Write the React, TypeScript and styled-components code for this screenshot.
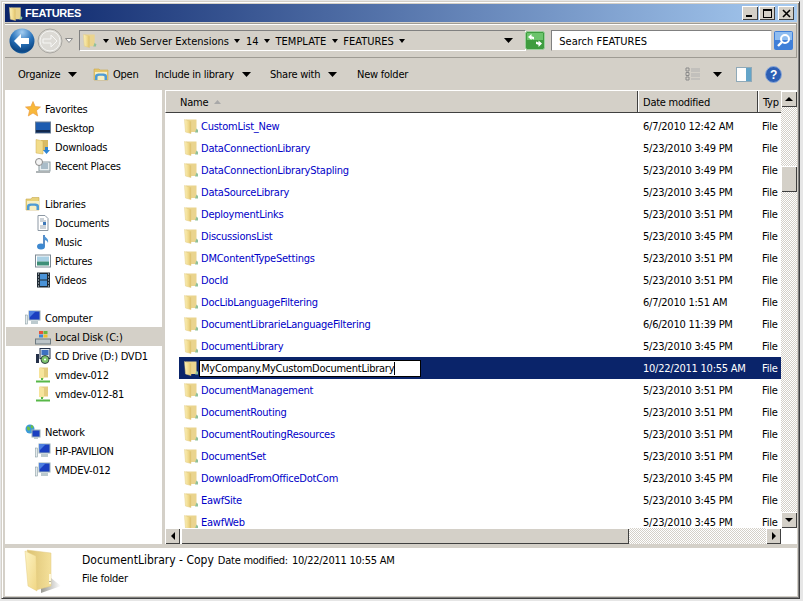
import { ReactNode, useId } from "react";
import styled, { createGlobalStyle } from "styled-components";

const rows = [
  ["CustomList_New", "6/7/2010 12:42 AM"],
  ["DataConnectionLibrary", "5/23/2010 3:49 PM"],
  ["DataConnectionLibraryStapling", "5/23/2010 3:49 PM"],
  ["DataSourceLibrary", "5/23/2010 3:45 PM"],
  ["DeploymentLinks", "5/23/2010 3:51 PM"],
  ["DiscussionsList", "5/23/2010 3:45 PM"],
  ["DMContentTypeSettings", "5/23/2010 3:51 PM"],
  ["DocId", "5/23/2010 3:51 PM"],
  ["DocLibLanguageFiltering", "6/7/2010 1:51 AM"],
  ["DocumentLibrarieLanguageFiltering", "6/6/2010 11:39 PM"],
  ["DocumentLibrary", "5/23/2010 3:45 PM"],
  ["MyCompany.MyCustomDocumentLibrary", "10/22/2011 10:55 AM", "edit"],
  ["DocumentManagement", "5/23/2010 3:51 PM"],
  ["DocumentRouting", "5/23/2010 3:51 PM"],
  ["DocumentRoutingResources", "5/23/2010 3:51 PM"],
  ["DocumentSet", "5/23/2010 3:51 PM"],
  ["DownloadFromOfficeDotCom", "5/23/2010 3:45 PM"],
  ["EawfSite", "5/23/2010 3:45 PM"],
  ["EawfWeb", "5/23/2010 3:45 PM"],
];

const FolderIcon = ({ size = 16 }: { size?: number }) => {
  const id = useId();
  return (
    <svg width={size} height={size} viewBox="0 0 16 16" style={{ flex: "none" }}>
      <defs>
        <linearGradient id={id} x1="0" y1="0" x2="1" y2="0">
          <stop offset="0" stopColor="#fbf1bb" />
          <stop offset="0.6" stopColor="#f0d98c" />
          <stop offset="1" stopColor="#dcbf68" />
        </linearGradient>
      </defs>
      <path d="M3 1.500h10.500v12.500H8z" fill="#ead48e" />
      <path d="M13.500 10.500l1.500 1.500v2.500h-3z" fill="#8fc09a" />
      <path d="M1.500 1.500l6.500 2v12l-5.500-1.500z" fill={`url(#${id})`} stroke="#e2ca80" strokeWidth="0.500" />
    </svg>
  );
};

const LargeFolder = () => (
  <svg width="42" height="46" viewBox="0 0 42 46">
    <defs>
      <linearGradient id="bigLeaf" x1="0" y1="0" x2="1" y2="1">
        <stop offset="0" stopColor="#fdf3c2" />
        <stop offset="1" stopColor="#f0d684" />
      </linearGradient>
      <linearGradient id="bigBack" x1="0" y1="0" x2="1" y2="0">
        <stop offset="0" stopColor="#dcc272" />
        <stop offset="1" stopColor="#f4e09a" />
      </linearGradient>
      <linearGradient id="bigShadow" x1="0" y1="0" x2="1" y2="0">
        <stop offset="0" stopColor="#9a9a94" />
        <stop offset="1" stopColor="#ffffff" />
      </linearGradient>
    </defs>
    <path d="M18 36l10-7 10 8-20 7z" fill="url(#bigShadow)" />
    <path d="M4 1l24 3v33L13 41z" fill="url(#bigBack)" stroke="#e2cb84" strokeWidth="0.500" />
    <path d="M2 2l11 5 1 35-9-5z" fill="url(#bigLeaf)" stroke="#e5cc80" strokeWidth="0.500" />
    <rect x="26" y="25" width="2" height="10" fill="#fff8d8" />
    <rect x="26.500" y="32" width="1" height="1" fill="#6a6a60" />
  </svg>
);

const Caret = ({ color = "#000" }: { color?: string }) => (
  <svg width="9" height="5" viewBox="0 0 9 5" style={{ flex: "none" }}>
    <path d="M0 0h9L4.500 5z" fill={color} />
  </svg>
);

const SmallCaret = () => (
  <svg width="6" height="4" viewBox="0 0 6 4" style={{ flex: "none" }}>
    <path d="M0 0h6L3 4z" fill="#000" />
  </svg>
);

const BackButton = () => (
  <svg width="26" height="26" viewBox="0 0 26 26">
    <defs>
      <radialGradient id="backFill" cx="0.5" cy="0.15" r="0.95">
        <stop offset="0" stopColor="#a4cdf0" />
        <stop offset="0.45" stopColor="#2a74bc" />
        <stop offset="0.8" stopColor="#0c4684" />
        <stop offset="1" stopColor="#2a80c4" />
      </radialGradient>
    </defs>
    <circle cx="13" cy="13" r="12.500" fill="url(#backFill)" />
    <path d="M5 13l7-7v4h8v6h-8v4z" fill="#fff" />
  </svg>
);

const ForwardButton = () => (
  <svg width="26" height="26" viewBox="0 0 26 26">
    <circle cx="13" cy="13" r="12" fill="#d8d6d0" stroke="#a9a7a2" />
    <circle cx="13" cy="13" r="10" fill="#dcdad5" stroke="#f4f4f2" />
    <path d="M20 13l-6-6v4H6v4h8v4z" fill="#dddbd6" stroke="#f6f6f4" />
  </svg>
);

const RefreshIcon = () => (
  <svg width="20" height="19" viewBox="0 0 20 19">
    <rect x="0.500" y="0.500" width="19" height="18" rx="2" fill="#3f9c3f" stroke="#9ccf9c" />
    <rect x="2" y="2" width="16" height="7" fill="#6cc46c" />
    <path d="M3 6l3.500-3v2.200L9 6v2.500L6.500 7.500V9z" fill="#fff" />
    <path d="M17 12.500L13.500 16v-2.200L11 13v-2.500l2.500 1V9.500z" fill="#fff" />
  </svg>
);

const SearchIcon = () => (
  <svg width="19" height="19" viewBox="0 0 19 19">
    <rect x="0" y="0" width="19" height="19" rx="2" fill="#3f7fd8" />
    <rect x="1" y="1" width="17" height="8" fill="#8fbdf0" />
    <circle cx="11" cy="8" r="4" fill="none" stroke="#fff" strokeWidth="2" />
    <path d="M8 11l-4 4" stroke="#fff" strokeWidth="2.400" />
  </svg>
);

const ViewsIcon = () => (
  <svg width="16" height="14" viewBox="0 0 16 14">
    <path d="M1 1h3v3H1zM1 5.500h3v3H1zM1 10h3v3H1z" fill="none" stroke="#8a8a8a" />
    <path d="M6 2h9M6 4h9M6 7h9M6 9h9M6 12h9" stroke="#b0b0b0" />
  </svg>
);

const PaneIcon = () => (
  <svg width="16" height="15" viewBox="0 0 16 15">
    <rect x="0.500" y="0.500" width="15" height="14" fill="#fdfdfd" stroke="#8fa9b8" />
    <rect x="10" y="1" width="5" height="13" fill="#63a4c8" />
  </svg>
);

const HelpIcon = () => (
  <svg width="17" height="17" viewBox="0 0 17 17">
    <circle cx="8.500" cy="8.500" r="8" fill="#2d5fb4" stroke="#8aa8d8" />
    <text x="8.500" y="13" textAnchor="middle" fontFamily="Liberation Sans, sans-serif" fontWeight="700" fontSize="12" fill="#fff">?</text>
  </svg>
);

const OpenIcon = () => (
  <svg width="16" height="16" viewBox="0 0 16 16">
    <path d="M1 3h5l1 1h8v10H1z" fill="#e8c76a" stroke="#c8a84e" strokeWidth="0.600" />
    <path d="M2 6h12v8H2z" fill="#f6efc4" />
    <path d="M2 14V10c0-2 2-2.500 6-2.500S14 8 14 10v4h-2.500v-3c0-1-1-1.200-3.500-1.200S4.500 10 4.500 11v3z" fill="#4e9bd4" />
  </svg>
);

const icons: Record<string, ReactNode> = {
  star: <path d="M8 0.500l2.200 5 5.300 0.500-4 3.500 1.200 5.500L8 12l-4.700 3 1.200-5.500-4-3.500 5.300-0.500z" fill="#f8b83a" stroke="#e8953a" strokeWidth="0.600" />,
  desktop: (
    <>
      <rect x="0.500" y="2" width="15" height="11" fill="#1d5cb0" stroke="#6c7f96" />
      <rect x="1" y="10" width="14" height="2.500" fill="#12284c" />
    </>
  ),
  downloads: (
    <>
      <path d="M6 1h7v11H6z" fill="#d9bb62" />
      <path d="M1 0.500l7 1.500v13l-7-1z" fill="#f2dc8a" stroke="#cfae56" strokeWidth="0.500" />
      <path d="M10 8h3v3h2l-3.500 4L8 11h2z" fill="#2d84d4" />
    </>
  ),
  recent: (
    <>
      <rect x="4" y="4" width="11" height="9" fill="#e8eef0" stroke="#8a9aa0" />
      <path d="M6 6h7M6 8h7M6 10h7" stroke="#6a8aa0" />
      <circle cx="4" cy="4" r="3.500" fill="#f4f4f4" stroke="#8a8a8a" />
      <rect x="1" y="13" width="14" height="2" fill="#aeb4b6" />
    </>
  ),
  libraries: (
    <>
      <path d="M1 3h5l1-1.500h7V14H1z" fill="#e8d27a" stroke="#c8a84e" strokeWidth="0.600" />
      <path d="M2 5h12v9H2z" fill="#f6efc4" />
      <path d="M2 14v-4c0-2 2-2.500 6-2.500s6 .5 6 2.500v4h-2.500v-3c0-1-1-1.200-3.500-1.200S4.500 10 4.500 11v3z" fill="#4e9bd4" />
    </>
  ),
  documents: (
    <>
      <path d="M3 0.500h7l3 3v12H3z" fill="#fff" stroke="#8d98a4" />
      <path d="M5 4h4M5 6h6M5 11h6M5 13h6" stroke="#9aa6b2" />
      <rect x="8" y="7" width="3" height="3" fill="#3f78b8" />
    </>
  ),
  music: (
    <>
      <path d="M9 1v11" stroke="#3470b4" strokeWidth="1.600" />
      <path d="M9 1c1 3 5 3 4 8-.5-2-2-3-4-3z" fill="#4e94d4" />
      <ellipse cx="6" cy="12.500" rx="4" ry="3" fill="#3d88d0" />
    </>
  ),
  pictures: (
    <>
      <rect x="0.500" y="2" width="15" height="12" fill="#fff" stroke="#7d8a94" />
      <rect x="2" y="3.500" width="12" height="5" fill="#a9d0e4" />
      <rect x="2" y="8.500" width="12" height="4" fill="#3f8f78" />
    </>
  ),
  videos: (
    <>
      <rect x="2" y="0.500" width="13" height="15" fill="#1f2a34" />
      <rect x="5" y="2" width="7" height="5.500" fill="#4a93d8" />
      <rect x="5" y="8.500" width="7" height="5.500" fill="#4a93d8" />
      <path d="M3 2h1M3 5h1M3 8h1M3 11h1M3 14h1M13 2h1M13 5h1M13 8h1M13 11h1M13 14h1" stroke="#dfe6ea" />
    </>
  ),
  computer: (
    <>
      <rect x="4" y="1" width="11" height="9" fill="#1a3fc0" stroke="#9ab0b8" />
      <path d="M4 1h7L4 8z" fill="#4d7fe0" />
      <rect x="0.500" y="5" width="2" height="9" fill="#e4eaec" stroke="#7a9098" strokeWidth="0.500" />
      <rect x="6" y="11" width="7" height="3" fill="#bccace" />
    </>
  ),
  disk: (
    <>
      <rect x="0.500" y="10" width="15" height="5" fill="#bcc4c8" stroke="#6d7a80" />
      <path d="M4 2h4v3H4z" fill="#e8553a" />
      <path d="M8.500 2h4v3h-4z" fill="#6db83f" />
      <path d="M4 5.500h4v3H4z" fill="#3d88d8" />
      <path d="M8.500 5.500h4v3h-4z" fill="#f0c02c" />
    </>
  ),
  cd: (
    <>
      <rect x="5" y="0.500" width="10" height="10" fill="#dfe8f0" stroke="#22304a" />
      <rect x="6.500" y="2" width="7" height="5" fill="#3d70c0" />
      <path d="M1 6h3v9H1z" fill="#243048" />
      <circle cx="10" cy="11.500" r="4" fill="#7bc26a" stroke="#344" />
      <circle cx="10" cy="11.500" r="1" fill="#fff" />
    </>
  ),
  share: (
    <>
      <path d="M5 0.500h8v10H5z" fill="#e4cc80" />
      <path d="M4 0.500l5 1.500v10l-5-1z" fill="#f6e49c" />
      <path d="M7 11v2M1 14.500h14" stroke="#58b848" strokeWidth="2" />
    </>
  ),
  network: (
    <>
      <circle cx="5" cy="5" r="4.500" fill="#3c9ad8" />
      <path d="M2 3c2-1 3 0 3 2s-2 2-3 0zM6 1c2 0 3 2 2 3s-3 0-2-3z" fill="#6cc048" />
      <rect x="7" y="6" width="8" height="7" fill="#1a3fc0" stroke="#9ab0b8" />
      <rect x="9" y="13" width="4" height="2" fill="#bccace" />
    </>
  ),
};

const NavIcon = ({ name }: { name: string }) => (
  <svg width="16" height="16" viewBox="0 0 16 16" style={{ flex: "none" }}>
    {icons[name]}
  </svg>
);

const nav = [
  { head: ["star", "Favorites"], items: [["desktop", "Desktop"], ["downloads", "Downloads"], ["recent", "Recent Places"]] },
  { head: ["libraries", "Libraries"], items: [["documents", "Documents"], ["music", "Music"], ["pictures", "Pictures"], ["videos", "Videos"]] },
  { head: ["computer", "Computer"], items: [["disk", "Local Disk (C:)"], ["cd", "CD Drive (D:) DVD1"], ["share", "vmdev-012"], ["share", "vmdev-012-81"]] },
  { head: ["network", "Network"], items: [["computer", "HP-PAVILION"], ["computer", "VMDEV-012"]] },
];

const App = () => (
  <>
    <GlobalStyle />
    <Window>
      <TitleBar>
        <FolderIcon size={15} />
        <TitleText>FEATURES</TitleText>
        <WindowButtons>
          <WindowButton><Minimize /></WindowButton>
          <WindowButton><Maximize /></WindowButton>
          <WindowButton>
            <svg width="9" height="9" viewBox="0 0 9 9"><path d="M1 1l7 7M8 1L1 8" stroke="#000" strokeWidth="1.600" /></svg>
          </WindowButton>
        </WindowButtons>
      </TitleBar>

      <AddressBar>
        <BackButton />
        <ForwardSlot><ForwardButton /></ForwardSlot>
        <HistoryArrow>
          <svg width="8" height="5" viewBox="0 0 8 5"><path d="M0.500 0.500h7L4 4.500z" fill="#fff" stroke="#8a8a8a" /></svg>
        </HistoryArrow>
        <AddressBox>
          <FolderIcon size={15} />
          <Crumbs>
            <SmallCaret />
            <span>Web Server Extensions</span>
            <SmallCaret />
            <span>14</span>
            <SmallCaret />
            <span>TEMPLATE</span>
            <SmallCaret />
            <span>FEATURES</span>
            <SmallCaret />
          </Crumbs>
          <AddressDrop><Caret /></AddressDrop>
        </AddressBox>
        <RefreshSlot><RefreshIcon /></RefreshSlot>
        <SearchBox>Search FEATURES</SearchBox>
        <SearchSlot><SearchIcon /></SearchSlot>
      </AddressBar>

      <CommandBar>
        <Command $width={75}>Organize<Caret /></Command>
        <OpenCommand><OpenIcon />Open</OpenCommand>
        <Command $width={115}>Include in library<Caret /></Command>
        <Command $width={87}>Share with<Caret /></Command>
        <span>New folder</span>
        <CommandRight>
          <ViewsIcon />
          <ViewCaret><Caret /></ViewCaret>
          <PaneIcon />
          <HelpSlot><HelpIcon /></HelpSlot>
        </CommandRight>
      </CommandBar>

      <Main>
        <NavPane>
          {nav.map((group) => (
            <NavGroup key={group.head[1]}>
              <NavHead>
                <NavIcon name={group.head[0]} />
                {group.head[1]}
              </NavHead>
              {group.items.map(([icon, label]) => (
                <NavItem key={label} $active={label === "Local Disk (C:)"}>
                  <NavIcon name={icon} />
                  {label}
                </NavItem>
              ))}
            </NavGroup>
          ))}
        </NavPane>

        <Content>
          <ContentTop>
            <ListArea>
              <Header>
                <NameHead>
                  Name
                  <svg width="7" height="4" viewBox="0 0 7 4"><path d="M0 4h7L3.500 0z" fill="#a8a8a8" /></svg>
                </NameHead>
                <DateHead>Date modified</DateHead>
                <TypeHead>Typ</TypeHead>
              </Header>
              <Rows>
                {rows.map(([name, date, edit]) => (
                  <Row key={name} $selected={!!edit}>
                    <NameCell>
                      <FolderIcon />
                      {edit ? (
                        <RenameBox><RenameText>{name}</RenameText></RenameBox>
                      ) : (
                        <FileName>{name}</FileName>
                      )}
                    </NameCell>
                    <DateCell>{date}</DateCell>
                    <TypeCell>File</TypeCell>
                  </Row>
                ))}
              </Rows>
            </ListArea>
            <VScroll>
              <ScrollButton $w={16} $h={16}><Arrow $dir="up" /></ScrollButton>
              <VTrack>
                <VThumb />
              </VTrack>
              <ScrollButton $w={16} $h={16}><Arrow $dir="down" /></ScrollButton>
            </VScroll>
          </ContentTop>
          <HScrollRow>
            <HScroll>
              <ScrollButton $w={15} $h={16}><Arrow $dir="left" /></ScrollButton>
              <HThumb />
              <HTrack />
              <ScrollButton $w={15} $h={16}><Arrow $dir="right" /></ScrollButton>
            </HScroll>
            <Corner />
          </HScrollRow>
        </Content>
      </Main>

      <Details>
        <LargeFolder />
        <DetailText>
          <DetailLine>
            <DetailName>DocumentLibrary - Copy</DetailName>
            <span>Date modified:</span>
            <span>10/22/2011 10:55 AM</span>
          </DetailLine>
          <span>File folder</span>
        </DetailText>
      </Details>
    </Window>
  </>
);

export default App;

const GlobalStyle = createGlobalStyle`
  html, body {
    margin: 0;
    padding: 0;
    background: #e6e6e6;
    overflow: hidden;
  }

  body {
    font-family: "DejaVu Sans Condensed", "DejaVu Sans", sans-serif;
    font-size: 11px;
    letter-spacing: -0.24px;
    color: #000;
  }
`;

const Window = styled.div`
  box-sizing: border-box;
  width: 799px;
  height: 598px;
  margin: 1px 0 0 1px;
  padding: 2px 2px 2px 3px;
  display: flex;
  flex-direction: column;
  background: #d4d0c8;
  border: 1px solid;
  border-color: #d4d0c8 #404040 #404040 #d4d0c8;
  box-shadow: inset 1px 1px 0 #fff, inset -1px -1px 0 #808080;
`;

const TitleBar = styled.div`
  height: 18px;
  flex: none;
  display: flex;
  align-items: center;
  padding-left: 3px;
  gap: 2px;
  background: linear-gradient(90deg, #0a246a, #a6caf0);
`;

const TitleText = styled.span`
  color: #fff;
  font-family: "Liberation Sans", sans-serif;
  font-weight: 700;
  font-size: 11px;
  letter-spacing: -0.3px;
`;

const WindowButtons = styled.div`
  margin-left: auto;
  margin-right: 3px;
  display: flex;
  gap: 0;
`;

const WindowButton = styled.div`
  width: 16px;
  height: 14px;
  margin-left: 1px;
  background: #d4d0c8;
  box-shadow: inset 1px 1px 0 #fff, inset -1px -1px 0 #404040;
  display: flex;
  align-items: center;
  justify-content: center;

  &:first-child {
    margin-left: 0;
  }
  &:nth-child(2) {
    margin-right: 2px;
  }
`;

const Minimize = styled.div`
  width: 6px;
  height: 2px;
  background: #000;
  margin: 6px 3px 0 0;
`;

const Maximize = styled.div`
  width: 7px;
  height: 6px;
  border: 1px solid #000;
  border-top-width: 2px;
`;

const AddressBar = styled.div`
  height: 35px;
  flex: none;
  margin-top: 1px;
  box-sizing: border-box;
  display: flex;
  align-items: center;
  padding: 0 3px 0 4px;
  border: 1px solid #9e9b93;
  border-left: 0;
  box-shadow: inset 0 1px 0 #fff;
`;

const ForwardSlot = styled.div`
  margin-left: 2px;
  display: flex;
`;

const HistoryArrow = styled.div`
  margin: 0 6px 0 2px;
  display: flex;
`;

const AddressBox = styled.div`
  box-sizing: border-box;
  width: 448px;
  height: 21px;
  display: flex;
  align-items: center;
  padding-left: 2px;
  border: 1px solid;
  border-color: #808080 #fff #fff #808080;
`;

const Crumbs = styled.div`
  display: flex;
  align-items: center;
  gap: 5.5px;
  margin-left: 6.5px;
  letter-spacing: 0;
  padding-top: 1px;
`;

const AddressDrop = styled.div`
  margin-left: auto;
  margin-right: 12px;
  display: flex;
`;

const RefreshSlot = styled.div`
  margin-left: -1px;
  display: flex;
`;

const SearchBox = styled.div`
  box-sizing: border-box;
  width: 221px;
  height: 21px;
  margin-left: 6px;
  padding: 1px 0 0 7px;
  display: flex;
  align-items: center;
  background: #fff;
  letter-spacing: 0;
  border: 1px solid;
  border-color: #808080 #d4d0c8 #d4d0c8 #808080;
`;

const SearchSlot = styled.div`
  margin-left: 2px;
  display: flex;
`;

const CommandBar = styled.div`
  height: 32px;
  flex: none;
  box-sizing: border-box;
  display: flex;
  align-items: center;
  padding-left: 13px;
`;

const Command = styled.div<{ $width: number }>`
  width: ${(p) => p.$width}px;
  display: flex;
  align-items: center;
  gap: 8px;
`;

const OpenCommand = styled.div`
  width: 62px;
  display: flex;
  align-items: center;
  gap: 4px;
`;

const CommandRight = styled.div`
  margin-left: auto;
  margin-right: 15px;
  display: flex;
  align-items: center;
`;

const ViewCaret = styled.div`
  display: flex;
  margin: 0 14px 0 12px;
`;

const HelpSlot = styled.div`
  display: flex;
  margin-left: 13px;
`;

const Main = styled.div`
  flex: 1;
  min-height: 0;
  display: flex;
`;

const NavPane = styled.div`
  width: 157px;
  flex: none;
  background: #fff;
  padding-top: 9px;
  box-sizing: border-box;
  overflow: hidden;
`;

const NavGroup = styled.div`
  margin-bottom: 19px;
`;

const NavHead = styled.div`
  height: 19px;
  box-sizing: border-box;
  padding: 1px 0 0 20px;
  display: flex;
  align-items: center;
  gap: 4px;
`;

const NavItem = styled.div<{ $active?: boolean }>`
  height: 19px;
  box-sizing: border-box;
  display: flex;
  align-items: center;
  gap: 4px;
  margin-left: 1px;
  padding: 1px 0 0 29px;
  background: ${(p) => (p.$active ? "#d4d0c8" : "transparent")};
`;

const Content = styled.div`
  flex: 1;
  min-width: 0;
  margin-left: 3px;
  display: flex;
  flex-direction: column;
  background: #fff;
`;

const ContentTop = styled.div`
  flex: 1;
  min-height: 0;
  display: flex;
`;

const ListArea = styled.div`
  width: 616px;
  display: flex;
  flex-direction: column;
  overflow: hidden;
`;

const Header = styled.div`
  height: 23px;
  flex: none;
  box-sizing: border-box;
  display: grid;
  grid-template-columns: 472px 120px 24px;
  background: #d4d0c8;
  border-top: 1px solid #fff;
  border-bottom: 1px solid #404040;
  border-left: 1px solid #fff;
`;

const HeadCell = styled.div`
  display: flex;
  align-items: center;
  gap: 6px;
  padding-top: 1px;
  white-space: nowrap;
`;

const NameHead = styled(HeadCell)`
  padding-left: 14px;
  border-right: 1px solid #404040;
`;

const DateHead = styled(HeadCell)`
  padding-left: 4px;
  border-left: 1px solid #fff;
  border-right: 1px solid #404040;
`;

const TypeHead = styled(HeadCell)`
  padding-left: 4px;
  border-left: 1px solid #fff;
`;

const Rows = styled.div`
  padding: 2px 0 0 14px;
  overflow: hidden;
  flex: 1;
`;

const Row = styled.div<{ $selected?: boolean }>`
  height: 22px;
  display: grid;
  grid-template-columns: 459px 119px 24px;
  align-items: center;
  background: ${(p) => (p.$selected ? "#0a246a" : "transparent")};
  color: ${(p) => (p.$selected ? "#fff" : "#000")};
`;

const NameCell = styled.div`
  display: flex;
  align-items: center;
  padding-left: 4px;
  gap: 2px;
  min-width: 0;
`;

const FileName = styled.span`
  color: #0000c8;
  white-space: nowrap;
`;

const RenameBox = styled.div`
  box-sizing: border-box;
  width: 222px;
  height: 17px;
  margin-left: -2px;
  padding-left: 1px;
  display: flex;
  align-items: center;
  background: #fff;
  border: 1px solid #000;
  color: #000;
`;

const RenameText = styled.span`
  border-right: 1px solid #000;
  line-height: 13px;
  white-space: nowrap;
`;

const DateCell = styled.div`
  padding-left: 5px;
  white-space: nowrap;
`;

const TypeCell = styled.div`
  padding-left: 5px;
`;

const checker = `repeating-conic-gradient(#d4d0c8 0 25%, #fff 0 50%) 0 0 / 2px 2px`;

const VScroll = styled.div`
  width: 16px;
  flex: none;
  padding-top: 1px;
  box-sizing: border-box;
  display: flex;
  flex-direction: column;
`;

const ScrollButton = styled.div<{ $w: number; $h: number }>`
  width: ${(p) => p.$w}px;
  height: ${(p) => p.$h}px;
  flex: none;
  display: flex;
  align-items: center;
  justify-content: center;
  background: #d4d0c8;
  box-shadow: inset 1px 1px 0 #fff, inset -1px -1px 0 #404040;
`;

const Arrow = styled.div<{ $dir: "up" | "down" | "left" | "right" }>`
  width: 0;
  height: 0;
  border: 4px solid transparent;
  ${(p) => {
    const side = { up: "bottom", down: "top", left: "right", right: "left" }[p.$dir];
    const gap = { up: "top", down: "bottom", left: "left", right: "right" }[p.$dir];
    return `border-${side}-color: #000; border-${gap}-width: 0;`;
  }}
`;

const VTrack = styled.div`
  flex: 1;
  background: ${checker};
  padding-top: 59px;
`;

const VThumb = styled.div`
  height: 26px;
  background: #d4d0c8;
  box-shadow: inset 1px 1px 0 #fff, inset -1px -1px 0 #404040;
`;

const HScrollRow = styled.div`
  height: 16px;
  flex: none;
  display: flex;
`;

const HScroll = styled.div`
  width: 616px;
  display: flex;
`;

const HThumb = styled.div`
  width: 448px;
  margin-left: 1px;
  background: #d4d0c8;
  box-shadow: inset 1px 1px 0 #fff, inset -1px -1px 0 #404040;
`;

const HTrack = styled.div`
  flex: 1;
  background: ${checker};
`;

const Corner = styled.div`
  width: 16px;
  background: #fff;
`;

const Details = styled.div`
  height: 48px;
  flex: none;
  margin-top: 4px;
  box-sizing: border-box;
  padding-left: 18px;
  display: flex;
  align-items: center;
  background: #fff;
  overflow: hidden;
`;

const DetailText = styled.div`
  margin-left: 17px;
  display: flex;
  flex-direction: column;
  gap: 5px;
  margin-bottom: 6px;
`;

const DetailLine = styled.div`
  display: flex;
  align-items: baseline;
  gap: 4px;
`;

const DetailName = styled.span`
  font-size: 12px;
  letter-spacing: 0;
`;
